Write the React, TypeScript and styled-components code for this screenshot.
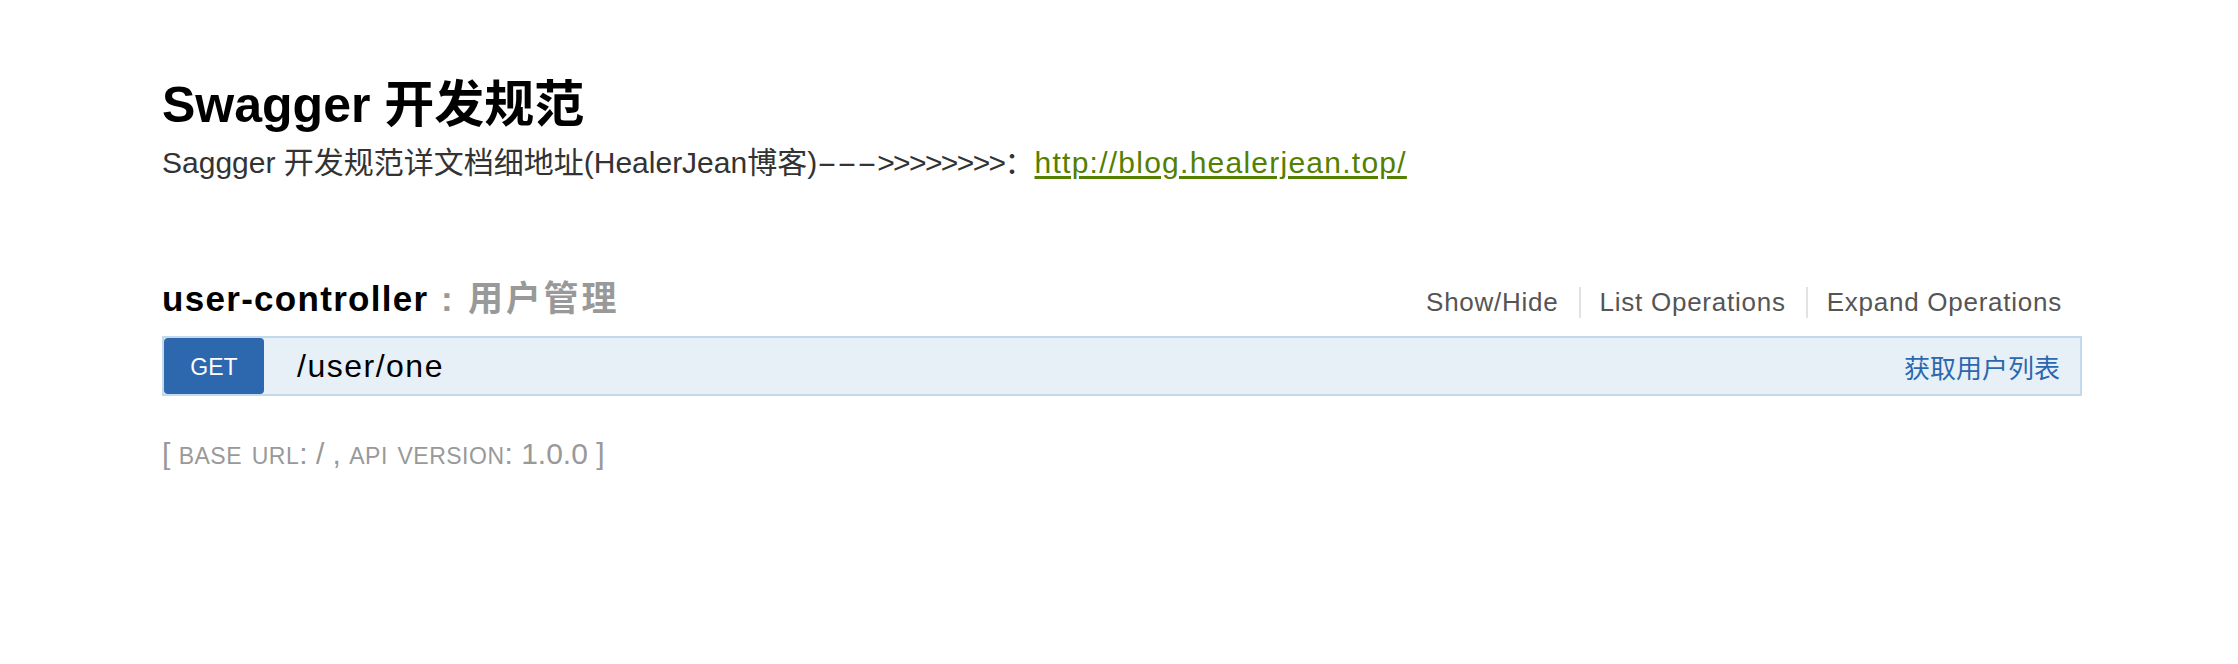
import React from "react";
import styled, { createGlobalStyle } from "styled-components";

const GlobalStyle = createGlobalStyle`
  html, body {
    margin: 0;
    padding: 0;
    background: #ffffff;
  }
  body {
    font-family: "Liberation Sans", "Noto Sans CJK SC", sans-serif;
  }
`;

const FONT = `"Liberation Sans", "Noto Sans CJK SC", sans-serif`;

const Wrap = styled.div`
  width: 1920px;
  margin-left: 162px;
  padding-top: 75px;
  font-family: ${FONT};
`;

const InfoTitle = styled.h1`
  margin: 0;
  font-size: 50px;
  line-height: 60px;
  font-weight: bold;
  color: #000000;
`;

const InfoDescription = styled.p`
  margin: 8px 0 0;
  font-size: 30px;
  line-height: 40px;
  color: #333333;
`;

const Dashes = styled.span`
  display: inline-block;
  width: 30px;
  margin-right: 30px;
  transform: scaleX(2);
  transform-origin: left center;
`;

const Chevrons = styled.span`
  letter-spacing: -1.6px;
`;

const BlogLink = styled.a`
  color: #547f00;
  text-decoration: underline;
  text-underline-offset: 3px;
  letter-spacing: 1.25px;
`;

const Resource = styled.section`
  margin-top: 96px;
`;

const ResourceHeading = styled.div`
  display: flex;
  justify-content: space-between;
  align-items: baseline;
`;

const ResourceTitle = styled.h2`
  margin: 0;
  font-size: 35px;
  line-height: 40px;
  font-weight: bold;
  color: #999999;
  letter-spacing: 1.3px;
`;

const ResourceName = styled.a`
  color: #000000;
  text-decoration: none;
`;

const ResourceLabel = styled.span`
  letter-spacing: 2.8px;
`;

const Options = styled.ul`
  display: flex;
  list-style: none;
  margin: 0 20px 0 0;
  padding: 0;
`;

const OptionItem = styled.li<{ $last?: boolean }>`
  font-size: 26px;
  line-height: 31px;
  color: #555555;
  letter-spacing: 0.75px;
  padding: ${(p) => (p.$last ? "0 0 0 19px" : "0 20px 0 19px")};
  border-right: ${(p) => (p.$last ? "none" : "2px solid #e2e2e2")};
  &:first-child {
    padding-left: 0;
  }
`;

const OperationBar = styled.div`
  margin-top: 17px;
  height: 60px;
  box-sizing: border-box;
  display: flex;
  align-items: center;
  background: #e7f0f7;
  border: 2px solid #c5d9ec;
`;

const Method = styled.span`
  align-self: stretch;
  width: 100px;
  display: flex;
  align-items: center;
  justify-content: center;
  background: #2d67ae;
  border-radius: 4px;
  color: #ffffff;
  font-size: 23px;
  padding-top: 2px;
  box-sizing: border-box;
`;

const Path = styled.span`
  margin-left: 33px;
  font-size: 32px;
  color: #000000;
  letter-spacing: 1.5px;
`;

const Summary = styled.span`
  margin-left: auto;
  margin-right: 20px;
  font-size: 26px;
  color: #2d67ae;
`;

const Footer = styled.h4`
  margin: 37px 0 0;
  font-size: 30px;
  line-height: 40px;
  font-weight: normal;
  color: #999999;
`;

const SmallCaps = styled.span`
  font-size: 1.1em;
  font-variant: small-caps;
  letter-spacing: 0.5px;
`;

export default function App() {
  return (
    <>
      <GlobalStyle />
      <Wrap>
        <InfoTitle>Swagger 开发规范</InfoTitle>
        <InfoDescription>
          Saggger 开发规范详文档细地址(HealerJean博客)<Dashes>---</Dashes>
          <Chevrons>&gt;&gt;&gt;&gt;&gt;&gt;&gt;&gt;</Chevrons>：
          <BlogLink href="#">http://blog.healerjean.top/</BlogLink>
        </InfoDescription>
        <Resource>
          <ResourceHeading>
            <ResourceTitle>
              <ResourceName href="#">user-controller</ResourceName>
              <ResourceLabel> : 用户管理</ResourceLabel>
            </ResourceTitle>
            <Options>
              <OptionItem>Show/Hide</OptionItem>
              <OptionItem>List Operations</OptionItem>
              <OptionItem $last>Expand Operations</OptionItem>
            </Options>
          </ResourceHeading>
          <OperationBar>
            <Method>GET</Method>
            <Path>/user/one</Path>
            <Summary>获取用户列表</Summary>
          </OperationBar>
        </Resource>
        <Footer>
          [ <SmallCaps>base url</SmallCaps>: / , <SmallCaps>api version</SmallCaps>: 1.0.0 ]
        </Footer>
      </Wrap>
    </>
  );
}
